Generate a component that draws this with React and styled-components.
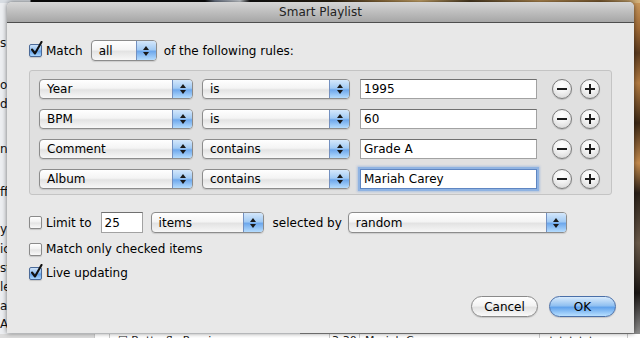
import React from 'react';
import styled, { createGlobalStyle } from 'styled-components';

const GlobalStyle = createGlobalStyle`
  html, body {
    margin: 0;
    padding: 0;
  }
  body {
    font-family: "DejaVu Sans", "Liberation Sans", sans-serif;
    font-size: 12px;
    color: #000;
  }
`;

const Desktop = styled.div`
  position: relative;
  width: 640px;
  height: 338px;
  overflow: hidden;
`;

/* iTunes window peeking out behind the sheet */
const Backdrop = styled.div`
  display: flex;
  flex-direction: column;
  width: 100%;
  height: 100%;
`;

const TopBand = styled.div`
  flex: none;
  height: 3px;
  background: linear-gradient(90deg, #d8dde3 0, #d8dde3 30px, #0b0b0b 31px, #0b0b0b 205px,
    #6b7586 215px, #cfd4da 240px, #111 250px, #2a2012 330px, #8a6a3a 380px, #c9a66a 420px,
    #4a3a22 470px, #b08850 540px, #7a5a30 600px, #d6b37b 640px);
`;

const Middle = styled.div`
  flex: 1;
  display: flex;
`;

const ListPane = styled.div`
  width: 300px;
  background: #eceef1;
  padding-top: 31px;
  font-size: 12px;
  color: #111;
`;

const ListItem = styled.div`
  height: ${p => p.$h}px;
  line-height: 19px;
  white-space: nowrap;
  overflow: hidden;
`;

const Art = styled.div`
  flex: 1;
  background: linear-gradient(180deg, #c8965a 0, #a06a36 25px, #5a3a1e 50px, #b27a40 80px,
    #3a2614 120px, #c48a4c 160px, #2a2018 190px, #6a5a4a 240px, #1a1614 290px, #8c8c8c 330px);
`;

const BottomRow = styled.div`
  flex: none;
  height: 5px;
  display: flex;
  background: #fff;
  font-size: 11px;
  line-height: 14px;
  overflow: hidden;
  color: #222;
`;

const Cell = styled.div`
  flex: none;
  width: ${p => p.$w}px;
  padding-left: ${p => p.$pad || 4}px;
  box-sizing: border-box;
  border-right: 1px solid #c9c9c9;
  background: ${p => p.$bg || 'transparent'};
  white-space: nowrap;
`;

/* the sheet */
const Window = styled.div`
  position: absolute;
  left: 7px;
  top: 2px;
  width: 627px;
  height: 331px;
  display: flex;
  flex-direction: column;
  background: #e8e8e8;
  border-radius: 5px 5px 0 0;
  box-shadow: 0 0 5px rgba(0, 0, 0, 0.55);
  overflow: hidden;
`;

const TitleBar = styled.div`
  flex: none;
  height: 20px;
  line-height: 20px;
  text-align: center;
  color: #222;
  background: linear-gradient(#d6d6d6, #a6a6a6);
  border-bottom: 1px solid #4e4e4e;
`;

const Body = styled.div`
  flex: 1;
  display: flex;
  flex-direction: column;
  padding: 17px 22px 0 22px;
`;

const Line = styled.div`
  display: flex;
  align-items: center;
  height: ${p => p.$h || 20}px;
  margin-top: ${p => p.$mt || 0}px;
`;

const Label = styled.span`
  margin-left: ${p => p.$ml || 0}px;
  margin-right: ${p => p.$mr || 0}px;
  white-space: nowrap;
`;

const Box = styled.span`
  position: relative;
  flex: none;
  width: 11px;
  height: 11px;
  margin-right: 4px;
  border: 1px solid ${p => (p.$checked ? '#4b6a98' : '#8a8a8a')};
  border-radius: 2px;
  background: ${p =>
    p.$checked
      ? 'linear-gradient(#cfe3f9, #8fbdef 48%, #5f9de6 52%, #a9d5fc)'
      : 'linear-gradient(#ffffff, #f0f0f0 48%, #e3e3e3 52%, #f9f9f9)'};
  box-shadow: 0 1px 1px rgba(0, 0, 0, 0.15);
`;

const Tick = styled.svg`
  position: absolute;
  left: 0;
  top: -4px;
`;

const Checkbox = ({ checked }) => (
  <Box $checked={checked}>
    {checked && (
      <Tick width="13" height="15" viewBox="0 0 13 15">
        <path d="M2 8.5 L5 12.5 L11.5 1" fill="none" stroke="#111" strokeWidth="2.1" strokeLinecap="round" strokeLinejoin="round" />
      </Tick>
    )}
  </Box>
);

const PopupWrap = styled.div`
  flex: none;
  display: flex;
  box-sizing: border-box;
  width: ${p => p.$w}px;
  height: ${p => p.$h || 20}px;
  margin-right: ${p => p.$mr || 0}px;
  border: 1px solid #8c8c8c;
  border-radius: 4px;
  overflow: hidden;
  background: linear-gradient(#ffffff, #f4f4f4 45%, #e3e3e3 55%, #f7f7f7);
  box-shadow: 0 1px 1px rgba(0, 0, 0, 0.12);
`;

const PopupText = styled.span`
  flex: 1;
  padding-left: 7px;
  display: flex;
  align-items: center;
  white-space: nowrap;
`;

const Stepper = styled.span`
  flex: none;
  width: 19px;
  display: flex;
  flex-direction: column;
  align-items: center;
  justify-content: center;
  gap: 2px;
  border-left: 1px solid #7390c0;
  background: linear-gradient(#d4e7fb, #a3cbf4 45%, #6ea8ec 55%, #b5dcfe);
`;

const Arrow = styled.span`
  width: 0;
  height: 0;
  border-left: 3px solid transparent;
  border-right: 3px solid transparent;
  ${p => (p.$up ? 'border-bottom: 4px solid #1a1a1a;' : 'border-top: 4px solid #1a1a1a;')}
`;

const Popup = ({ w, h, mr, children }) => (
  <PopupWrap $w={w} $h={h} $mr={mr}>
    <PopupText>{children}</PopupText>
    <Stepper>
      <Arrow $up />
      <Arrow />
    </Stepper>
  </PopupWrap>
);

const Field = styled.div`
  flex: none;
  box-sizing: border-box;
  width: ${p => p.$w}px;
  height: ${p => p.$h || 20}px;
  margin-right: ${p => p.$mr || 0}px;
  padding-left: 3px;
  display: flex;
  align-items: center;
  background: #fff;
  border: 1px solid ${p => (p.$focus ? '#5f86c2' : '#a2a2a2')};
  border-top-color: ${p => (p.$focus ? '#5f86c2' : '#707070')};
  box-shadow: ${p => (p.$focus ? '0 0 0 2px #8fb3e2, 0 0 2px 3px rgba(120, 160, 220, 0.45)' : 'none')};
  white-space: nowrap;
`;

const RulesBox = styled.div`
  margin-top: 9px;
  padding: 8px 11px 5px 9px;
  display: flex;
  flex-direction: column;
  gap: 10px;
  background: #e0e0e0;
  border: 1px solid #c4c4c4;
  border-radius: 3px;
`;

const RuleRow = styled.div`
  display: flex;
  align-items: center;
  height: 20px;
`;

const Round = styled.span`
  position: relative;
  flex: none;
  box-sizing: border-box;
  width: 20px;
  height: 20px;
  margin-left: ${p => p.$ml || 0}px;
  border-radius: 50%;
  border: 1px solid #7b7b7b;
  background: radial-gradient(circle at 50% 30%, #ffffff 0, #f2f2f2 45%, #cfcfcf 100%);
  box-shadow: 0 1px 1px rgba(0, 0, 0, 0.18);

  &::before,
  &::after {
    content: '';
    position: absolute;
    left: 4px;
    top: 8px;
    width: 10px;
    height: 2px;
    background: #1c1c1c;
  }
  &::after {
    display: ${p => (p.$plus ? 'block' : 'none')};
    transform: rotate(90deg);
  }
`;

const Footer = styled.div`
  display: flex;
  justify-content: flex-end;
  gap: 11px;
  margin-top: 14px;
  margin-right: -4px;
`;

const Button = styled.div`
  box-sizing: border-box;
  width: 67px;
  height: 21px;
  display: flex;
  align-items: center;
  justify-content: center;
  border-radius: 11px;
  border: 1px solid ${p => (p.$primary ? '#4a6fa8' : '#8a8a8a')};
  background: ${p =>
    p.$primary
      ? 'linear-gradient(#d9ebfc, #92c1f1 45%, #62a3ec 55%, #b9e0ff)'
      : 'linear-gradient(#ffffff, #f3f3f3 45%, #e2e2e2 55%, #fafafa)'};
  box-shadow: 0 1px 1px rgba(0, 0, 0, 0.15);
`;

const rules = [
  { field: 'Year', op: 'is', value: '1995' },
  { field: 'BPM', op: 'is', value: '60' },
  { field: 'Comment', op: 'contains', value: 'Grade A' },
  { field: 'Album', op: 'contains', value: 'Mariah Carey', focus: true },
];

const sidebar = [
  ['s', 42], ['o', 19], ['d', 45], ['n"', 43], ['ff', 37],
  ['y', 20], ['ic', 19], ['st', 19], ['le', 19], ['a', 18], ['A', 19],
];

export default function App() {
  return (
    <>
      <GlobalStyle />
      <Desktop>
        <Backdrop>
          <TopBand />
          <Middle>
            <ListPane>
              {sidebar.map(([t, h], i) => (
                <ListItem key={i} $h={h}>{t}</ListItem>
              ))}
            </ListPane>
            <Art />
          </Middle>
          <BottomRow>
            <Cell $w={95} $bg="#dcdcdc" />
            <Cell $w={15} />
            <Cell $w={220} $pad={8}>☐ Butterfly Reprise</Cell>
            <Cell $w={30} $pad={2}>3:30</Cell>
            <Cell $w={180} $pad={5}>Mariah Carey</Cell>
            <Cell $w={88} $pad={6}>★★★★★</Cell>
          </BottomRow>
        </Backdrop>

        <Window>
          <TitleBar>Smart Playlist</TitleBar>
          <Body>
            <Line $h={21}>
              <Checkbox checked />
              <Label $mr={8}>Match</Label>
              <Popup w={66} h={21} mr={7}>all</Popup>
              <Label>of the following rules:</Label>
            </Line>

            <RulesBox>
              {rules.map((r, i) => (
                <RuleRow key={i}>
                  <Popup w={154} mr={9}>{r.field}</Popup>
                  <Popup w={148} mr={10}>{r.op}</Popup>
                  <Field $w={177} $focus={r.focus}>{r.value}</Field>
                  <Round $ml={15} />
                  <Round $ml={8} $plus />
                </RuleRow>
              ))}
            </RulesBox>

            <Line $h={21} $mt={17}>
              <Checkbox />
              <Label $mr={9}>Limit to</Label>
              <Field $w={42} $h={21} $mr={8}>25</Field>
              <Popup w={113} h={21} mr={9}>items</Popup>
              <Label $mr={6}>selected by</Label>
              <Popup w={219} h={21}>random</Popup>
            </Line>
            <Line $h={18} $mt={7}>
              <Checkbox />
              <Label>Match only checked items</Label>
            </Line>
            <Line $h={18} $mt={6}>
              <Checkbox checked />
              <Label>Live updating</Label>
            </Line>

            <Footer>
              <Button>Cancel</Button>
              <Button $primary>OK</Button>
            </Footer>
          </Body>
        </Window>
      </Desktop>
    </>
  );
}
